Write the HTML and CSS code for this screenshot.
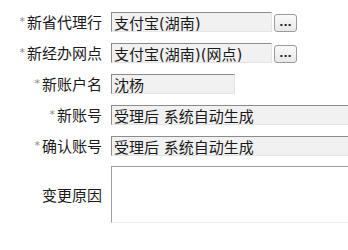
FILE: index.html
```html
<!DOCTYPE html>
<html lang="zh-CN">
<head>
    <meta charset="UTF-8">
    <title>账户变更</title>
    <link rel="stylesheet" href="styles.css">
</head>
<body>
    <form class="change-form">
        <div class="form-row">
            <label class="field-label"><span class="req">*</span>新省代理行</label>
            <div class="field">
                <input type="text" class="text-input w-mid" value="支付宝(湖南)" readonly>
                <button type="button" class="pick-btn">...</button>
            </div>
        </div>
        <div class="form-row">
            <label class="field-label"><span class="req">*</span>新经办网点</label>
            <div class="field">
                <input type="text" class="text-input w-mid" value="支付宝(湖南)(网点)" readonly>
                <button type="button" class="pick-btn">...</button>
            </div>
        </div>
        <div class="form-row">
            <label class="field-label"><span class="req">*</span>新账户名</label>
            <div class="field">
                <input type="text" class="text-input w-short" value="沈杨" readonly>
            </div>
        </div>
        <div class="form-row">
            <label class="field-label"><span class="req">*</span>新账号</label>
            <div class="field">
                <input type="text" class="text-input w-full" value="受理后 系统自动生成" readonly>
            </div>
        </div>
        <div class="form-row">
            <label class="field-label"><span class="req">*</span>确认账号</label>
            <div class="field">
                <input type="text" class="text-input w-full" value="受理后 系统自动生成" readonly>
            </div>
        </div>
        <div class="form-row tall">
            <label class="field-label">变更原因</label>
            <div class="field">
                <textarea class="reason"></textarea>
            </div>
        </div>
    </form>
</body>
</html>
```

FILE: styles.css
```css
* {
    margin: 0;
    padding: 0;
    box-sizing: border-box;
}

body {
    font-family: "Noto Sans CJK SC", "Noto Sans", sans-serif;
    font-size: 15px;
    color: #1a1a1a;
    background: #fff;
    overflow: hidden;
}

.change-form {
    display: flex;
    flex-direction: column;
    gap: 11px;
    padding-top: 12px;
}

.form-row {
    display: grid;
    grid-template-columns: 102px 1fr;
    column-gap: 9px;
    align-items: center;
    height: 20px;
}

.form-row.tall {
    height: 57px;
    margin-top: -1px;
}

.field-label {
    text-align: right;
    line-height: 20px;
    white-space: nowrap;
}

.req {
    color: #8a8a8a;
    font-family: "DejaVu Sans", sans-serif;
    font-size: 11px;
    vertical-align: 3px;
    margin-right: 2px;
}

.field {
    display: flex;
    align-items: center;
    gap: 2px;
    height: 100%;
    min-width: 0;
}

.text-input {
    height: 20px;
    font-family: "DejaVu Sans", "Noto Sans CJK SC", sans-serif;
    font-size: 15px;
    line-height: 18px;
    padding: 0 2px;
    color: #1a1a1a;
    background: #f1f1f1;
    border: 1px solid #e4e4e4;
    border-top-color: #8c8c8c;
    border-left-color: #8c8c8c;
    outline: none;
}

.w-mid {
    width: 161px;
}

.w-short {
    width: 124px;
}

/* runs off the right edge of the panel */
.w-full {
    flex: 1;
    min-width: 0;
    border-right: 0;
}

.pick-btn {
    width: 23px;
    height: 18px;
    margin-top: 2px;
    font-family: "DejaVu Sans", sans-serif;
    font-size: 11px;
    font-weight: bold;
    line-height: 12px;
    color: #222;
    background: linear-gradient(#fafafa, #e8e8e8);
    border: 1px solid #9a9a9a;
    border-radius: 3px;
}

.reason {
    flex: 1;
    min-width: 0;
    height: 57px;
    resize: none;
    background: #fff;
    border: 1px solid #ececec;
    border-top-color: #a0a0a0;
    border-left-color: #a0a0a0;
    border-right: 0;
    outline: none;
}
```
